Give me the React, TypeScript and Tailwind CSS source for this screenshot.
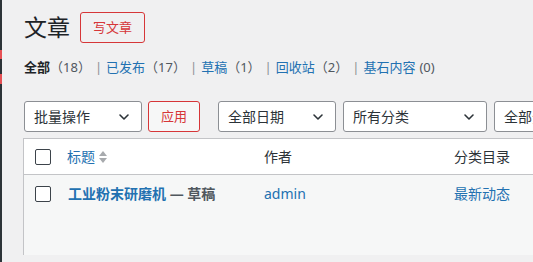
import { ChevronDown } from 'lucide-react'

const font = { fontFamily: '"Noto Sans", "Noto Sans CJK SC", sans-serif' }

function Select({ label, width }: { label: string; width: string }) {
  return (
    <div
      className={`flex h-[31px] ${width} shrink-0 items-center justify-between rounded-[3px] border border-[#8c8f94] bg-white pl-[9px] pr-[9px] text-[14px] leading-none text-[#2c3338]`}
    >
      <span>{label}</span>
      <ChevronDown size={16} strokeWidth={2.4} className="text-[#2c3338]" />
    </div>
  )
}

function Checkbox() {
  return <span className="block h-4 w-4 rounded-[2px] border border-[#3c434a] bg-white" />
}

function Count({ n, last }: { n: string; last?: boolean }) {
  return <span className={last ? 'ml-1 text-[#50575e]' : 'text-[#50575e]'}>{n}</span>
}

function Sep() {
  return <span className="mx-[4px] text-[#8c8f94]">|</span>
}

export default function App() {
  const views = [
    { label: '已发布', n: '（17）' },
    { label: '草稿', n: '（1）' },
    { label: '回收站', n: '（2）' },
  ]

  return (
    <div className="flex h-[262px] w-[533px] overflow-hidden bg-[#f0f0f1]" style={font}>
      {/* admin menu edge */}
      <div className="relative h-full w-[2px] shrink-0 bg-[#2c3338]">
        <span className="absolute left-0 top-[50px] h-[9px] w-[2px] bg-[#e65054]" />
        <span className="absolute left-0 top-[74px] h-[10px] w-[2px] bg-[#e65054]" />
      </div>

      <div className="flex min-w-0 flex-1 flex-col pl-[21px]">
        <div className="mt-[12px] flex items-center gap-[10px]">
          <h1 className="pl-[1px] text-[23px] font-normal leading-[31px] text-[#1d2327]">文章</h1>
          <button className="flex h-[31px] w-[65px] items-center justify-center rounded-[3px] border border-[#d63638] text-[13px] leading-none text-[#d63638]">
            写文章
          </button>
        </div>

        <div className="mt-[14px] flex items-center whitespace-nowrap pl-[1px] text-[13px] leading-[20px]">
          <span className="font-bold text-[#1d2327]">全部</span>
          <Count n="（18）" />
          <Sep />
          {views.map((v) => (
            <span key={v.label} className="flex items-center">
              <span className="text-[#2271b1]">{v.label}</span>
              <Count n={v.n} />
              <Sep />
            </span>
          ))}
          <span className="text-[#2271b1]">基石内容</span>
          <Count n="(0)" last />
        </div>

        <div className="mt-[24px] flex items-center pl-[1px]">
          <Select label="批量操作" width="w-[118px]" />
          <button className="ml-[6px] flex h-[31px] w-[52px] shrink-0 items-center justify-center rounded-[3px] border border-[#d63638] bg-[#f6f7f7] text-[13px] leading-none text-[#d63638]">
            应用
          </button>
          <div className="ml-[18px]">
            <Select label="全部日期" width="w-[118px]" />
          </div>
          <div className="ml-[7px]">
            <Select label="所有分类" width="w-[144px]" />
          </div>
          <div className="ml-[7px]">
            <Select label="全部分类" width="w-[120px]" />
          </div>
        </div>

        <div className="mt-[6px] w-[600px] border-l border-t border-[#c3c4c7] bg-white">
          <div className="flex h-[36px] items-center border-b border-[#c3c4c7] bg-white text-[14px] leading-none">
            <div className="flex w-[43px] shrink-0 pl-[11px]">
              <Checkbox />
            </div>
            <div className="flex w-[197px] shrink-0 items-center text-[#2271b1]">
              标题
              <svg width="8" height="14" viewBox="0 0 8 14" className="ml-[4px]">
                <path d="M4 1 L8 6 L0 6 Z" fill="#a7aaad" />
                <path d="M0 8 L8 8 L4 13 Z" fill="#a7aaad" />
              </svg>
            </div>
            <div className="w-[190px] shrink-0 text-[#2c3338]">作者</div>
            <div className="shrink-0 text-[#2c3338]">分类目录</div>
          </div>
          <div className="flex h-[80px] items-start bg-[#f6f7f7] pt-[10px] text-[14px] leading-[18px]">
            <div className="flex w-[43px] shrink-0 pl-[11px] pt-[1px]">
              <Checkbox />
            </div>
            <div className="w-[197px] shrink-0 pl-[1px] font-bold">
              <span className="text-[#2271b1]">工业粉末研磨机</span>
              <span className="text-[#50575e]"> — 草稿</span>
            </div>
            <div className="w-[190px] shrink-0 text-[#2271b1]">admin</div>
            <div className="shrink-0 text-[#2271b1]">最新动态</div>
          </div>
        </div>
      </div>
    </div>
  )
}
